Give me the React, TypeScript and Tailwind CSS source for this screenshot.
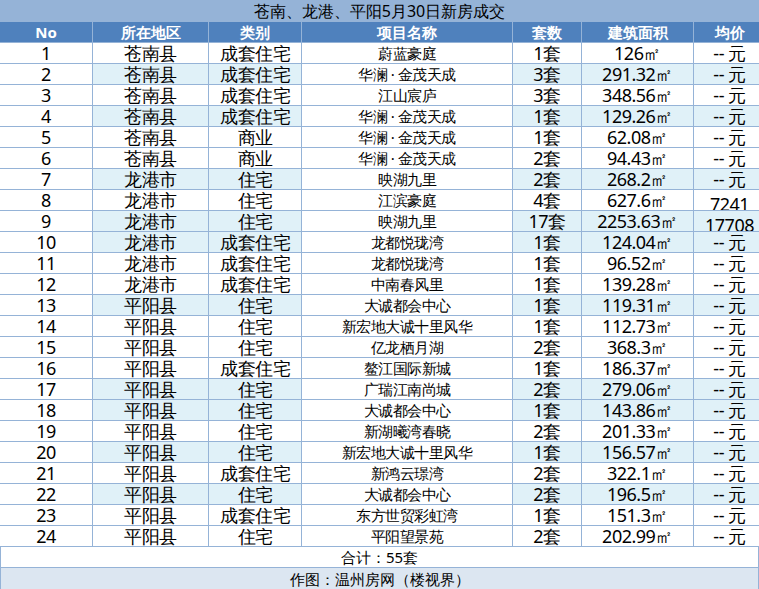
const rows: [string, string, string, string, string, string, string][] = [
  ['1', '苍南县', '成套住宅', '蔚蓝豪庭', '1套', '126㎡', '-- 元'],
  ['2', '苍南县', '成套住宅', '华澜 · 金茂天成', '3套', '291.32㎡', '-- 元'],
  ['3', '苍南县', '成套住宅', '江山宸庐', '3套', '348.56㎡', '-- 元'],
  ['4', '苍南县', '成套住宅', '华澜 · 金茂天成', '1套', '129.26㎡', '-- 元'],
  ['5', '苍南县', '商业', '华澜 · 金茂天成', '1套', '62.08㎡', '-- 元'],
  ['6', '苍南县', '商业', '华澜 · 金茂天成', '2套', '94.43㎡', '-- 元'],
  ['7', '龙港市', '住宅', '映湖九里', '2套', '268.2㎡', '-- 元'],
  ['8', '龙港市', '住宅', '江滨豪庭', '4套', '627.6㎡', '7241'],
  ['9', '龙港市', '住宅', '映湖九里', '17套', '2253.63㎡', '17708'],
  ['10', '龙港市', '成套住宅', '龙都悦珑湾', '1套', '124.04㎡', '-- 元'],
  ['11', '龙港市', '成套住宅', '龙都悦珑湾', '1套', '96.52㎡', '-- 元'],
  ['12', '龙港市', '成套住宅', '中南春风里', '1套', '139.28㎡', '-- 元'],
  ['13', '平阳县', '住宅', '大诚都会中心', '1套', '119.31㎡', '-- 元'],
  ['14', '平阳县', '住宅', '新宏地大诚十里风华', '1套', '112.73㎡', '-- 元'],
  ['15', '平阳县', '住宅', '亿龙栖月湖', '2套', '368.3㎡', '-- 元'],
  ['16', '平阳县', '成套住宅', '鳌江国际新城', '1套', '186.37㎡', '-- 元'],
  ['17', '平阳县', '住宅', '广瑞江南尚城', '2套', '279.06㎡', '-- 元'],
  ['18', '平阳县', '住宅', '大诚都会中心', '1套', '143.86㎡', '-- 元'],
  ['19', '平阳县', '住宅', '新湖曦湾春晓', '2套', '201.33㎡', '-- 元'],
  ['20', '平阳县', '住宅', '新宏地大诚十里风华', '1套', '156.57㎡', '-- 元'],
  ['21', '平阳县', '成套住宅', '新鸿云璟湾', '2套', '322.1㎡', '-- 元'],
  ['22', '平阳县', '住宅', '大诚都会中心', '2套', '196.5㎡', '-- 元'],
  ['23', '平阳县', '成套住宅', '东方世贸彩虹湾', '1套', '151.3㎡', '-- 元'],
  ['24', '平阳县', '住宅', '平阳望景苑', '2套', '202.99㎡', '-- 元'],
];

const shaded = new Set(['2', '4', '7', '9', '10', '13', '17', '18', '20', '22']);
const heads = ['No', '所在地区', '类别', '项目名称', '套数', '建筑面积', '均价'];
const font = "font-['Noto_Sans_CJK_SC','Liberation_Sans',sans-serif]";

export default function App() {
  return (
    <div className={`w-[759px] h-[589px] bg-white text-black overflow-hidden ${font}`}>
      <div className="h-[22px] bg-[#95b3d7] flex items-center justify-center text-[16px] leading-[22px]">
        苍南、龙港、平阳5月30日新房成交
      </div>
      <div className="grid grid-cols-[92px_115px_92px_210px_68px_111px_71px] gap-px bg-[#95b3d7] pb-px">
        {heads.map((h) => (
          <div key={h} className="h-[20px] bg-[#4f81bd] text-white font-bold text-[15px] leading-[20px] text-center">
            {h}
          </div>
        ))}
        {rows.map((r) =>
          r.map((c, i) => {
            const blue = shaded.has(r[0]) && i !== 0 && i !== 3;
            const size = i === 3 ? 'text-[15px] leading-[20px]' : i === 6 && !c.startsWith('-') ? 'text-[18px] leading-[20px] pt-[4px]' : 'text-[18px] leading-[20px]';
            return (
              <div
                key={r[0] + '-' + i}
                className={`h-[20px] ${blue ? 'bg-[#e0f1f8]' : 'bg-white'} ${size} text-center whitespace-nowrap overflow-hidden font-['Liberation_Sans','Noto_Sans_CJK_SC',sans-serif] tracking-[-0.5px]`}
              >
                {c}
              </div>
            );
          })
        )}
      </div>
      <div className="h-[21px] text-center text-[15px] leading-[20px] border-b border-x border-[#95b3d7]">
        合计：55套
      </div>
      <div className="h-[22px] bg-[#dce6f1] text-center text-[15px] leading-[22px] border-x border-[#95b3d7]">
        作图：温州房网（楼视界）
      </div>
    </div>
  );
}
